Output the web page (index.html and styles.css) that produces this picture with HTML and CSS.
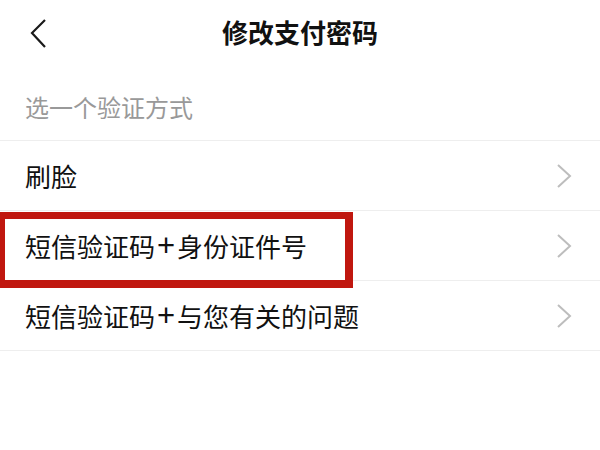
FILE: index.html
```html
<!DOCTYPE html>
<html lang="zh-CN">
<head>
<meta charset="utf-8">
<link rel="stylesheet" href="styles.css">
</head>
<body>
<header class="topbar">
  <div class="back">
    <svg width="20" height="32" viewBox="0 0 20 32"><polyline points="15,3 2,16 15,30" fill="none" stroke="#1a1a1a" stroke-width="2.2"/></svg>
  </div>
  <h1 class="title">修改支付密码</h1>
  <div class="spacer"></div>
</header>
<div class="section-label">选一个验证方式</div>
<ul class="list">
  <li class="row"><span class="row-text">刷脸</span><svg class="chev" width="16" height="26" viewBox="0 0 16 26"><polyline points="2,2 14,13 2,24" fill="none" stroke="#bdbdbd" stroke-width="2"/></svg></li>
  <li class="row"><span class="row-text">短信验证码<span class="plus">+</span>身份证件号</span><svg class="chev" width="16" height="26" viewBox="0 0 16 26"><polyline points="2,2 14,13 2,24" fill="none" stroke="#bdbdbd" stroke-width="2"/></svg><div class="highlight"></div></li>
  <li class="row"><span class="row-text">短信验证码<span class="plus">+</span>与您有关的问题</span><svg class="chev" width="16" height="26" viewBox="0 0 16 26"><polyline points="2,2 14,13 2,24" fill="none" stroke="#bdbdbd" stroke-width="2"/></svg></li>
</ul>
</body>
</html>
```

FILE: styles.css
```css
* { box-sizing: border-box; }
html, body {
  margin: 0;
  padding: 0;
  background: #fff;
  font-family: "Noto Sans CJK SC", "Noto Sans", sans-serif;
}
.topbar {
  height: 64px;
  display: grid;
  grid-template-columns: 80px 1fr 80px;
  align-items: center;
}
.back {
  padding-left: 30px;
  padding-top: 1px;
  display: flex;
  align-items: center;
}
.title {
  margin: 0;
  text-align: center;
  font-size: 26px;
  line-height: 30px;
  font-weight: 700;
  color: #111;
}
.section-label {
  padding: 31px 0 21px 25px;
  font-size: 24px;
  line-height: 24px;
  color: #999;
}
.list {
  list-style: none;
  margin: 0;
  padding: 0;
  border-top: 1px solid #eeeeee;
}
.row {
  position: relative;
  height: 70px;
  border-bottom: 1px solid #eeeeee;
  display: flex;
  align-items: center;
  justify-content: space-between;
  padding: 0 28px 0 25px;
}
.row-text {
  font-size: 26px;
  line-height: 30px;
  color: #111;
}
.plus {
  display: inline-block;
  width: 22px;
  text-align: center;
  font-family: "Liberation Sans", sans-serif;
  font-size: 31px;
  line-height: 30px;
  vertical-align: top;
}
.chev { display: block; }
.highlight {
  position: absolute;
  left: 0;
  top: 1px;
  width: 353px;
  height: 76px;
  border: 7px solid #c0170f;
  border-left-width: 5px;
  border-right-width: 8px;
  border-bottom-width: 8px;
}
```
